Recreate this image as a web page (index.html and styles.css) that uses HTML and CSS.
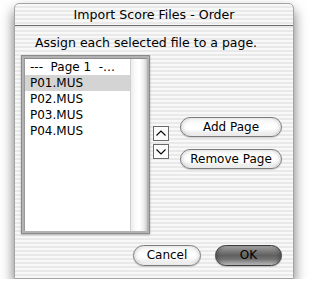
FILE: index.html
```html
<!DOCTYPE html>
<html>
<head>
<meta charset="utf-8">
<link rel="stylesheet" href="styles.css">
</head>
<body>
<div class="window">
  <div class="titlebar">Import Score Files - Order</div>
  <div class="content">
    <div class="prompt">Assign each selected file to a page.</div>
    <div class="main">
      <div class="listframe">
        <div class="listinner">
          <div class="rows">
            <div class="row">---  Page 1  -…</div>
            <div class="row selected">P01.MUS</div>
            <div class="row">P02.MUS</div>
            <div class="row">P03.MUS</div>
            <div class="row">P04.MUS</div>
          </div>
          <div class="scroll"></div>
        </div>
      </div>
      <div class="arrows">
        <div class="arrow"><svg width="14" height="13" viewBox="0 0 14 13"><path d="M2.5 8.5 L7 4 L11.5 8.5" fill="none" stroke="#000" stroke-width="1.1"/></svg></div>
        <div class="arrow"><svg width="14" height="13" viewBox="0 0 14 13"><path d="M2.5 4.5 L7 9 L11.5 4.5" fill="none" stroke="#000" stroke-width="1.1"/></svg></div>
      </div>
      <div class="sidebuttons">
        <div class="btn side">Add Page</div>
        <div class="btn side">Remove Page</div>
      </div>
    </div>
    <div class="footer">
      <div class="btn cancel">Cancel</div>
      <div class="btn ok">OK</div>
    </div>
  </div>
</div>
</body>
</html>
```
FILE: styles.css
```css
html, body {
  margin: 0;
  padding: 0;
  background: #ffffff;
}
body {
  font-family: "DejaVu Sans", Verdana, sans-serif;
  color: #000;
}
.window {
  margin: 3px 0 0 14px;
  width: 280px;
  height: 276px;
  box-sizing: border-box;
  border: 1px solid #a4a4a4;
  border-radius: 5px 5px 0 0;
  background: repeating-linear-gradient(to bottom, #f8f8f8 0px, #f8f8f8 2px, #e9e9e9 2px, #e9e9e9 4px);
  box-shadow: 0 7px 13px rgba(0,0,0,0.55);
  display: flex;
  flex-direction: column;
}
.titlebar {
  height: 21px;
  line-height: 21px;
  border-bottom: 1px solid #6e6e6e;
  text-align: center;
  font-size: 12.6px;
  border-radius: 5px 5px 0 0;
}
.content {
  padding: 8px 11px 0 6px;
  display: flex;
  flex-direction: column;
}
.prompt {
  padding-left: 14px;
  line-height: 18px;
  font-size: 12.5px;
}
.main {
  display: flex;
  align-items: flex-start;
  margin-top: 3px;
}
.listframe {
  width: 131px;
  height: 179px;
  box-sizing: border-box;
  border: 1px solid #8a8a8a;
  padding: 2px;
  background: #b2b2b2;
  box-shadow: 0 1px 2px rgba(0,0,0,0.25);
}
.listinner {
  height: 100%;
  box-sizing: border-box;
  border-top: 1px solid #8c8c8c;
  border-left: 1px solid #9a9a9a;
  background: #fff;
  display: flex;
}
.rows {
  flex: 1;
  font-size: 12px;
}
.row {
  height: 16px;
  line-height: 16px;
  padding-left: 5px;
  white-space: pre;
  overflow: hidden;
}
.row.selected {
  background: #d4d4d4;
}
.scroll {
  width: 16px;
  border-left: 1px solid #cfcfcf;
  background: linear-gradient(to right, #ececec 0%, #fcfcfc 30%, #ffffff 55%, #eeeeee 80%, #cdcdcd 100%);
}
.arrows {
  margin-left: 3px;
  margin-top: 71px;
  display: flex;
  flex-direction: column;
  gap: 3px;
}
.arrow {
  width: 16px;
  height: 15px;
  box-sizing: border-box;
  border: 1px solid #6a6a6a;
  background: #fbfbfb;
  display: flex;
}
.sidebuttons {
  margin-left: 11px;
  margin-top: 62px;
  display: flex;
  flex-direction: column;
  gap: 12px;
}
.btn {
  box-sizing: border-box;
  border-radius: 11px;
  text-align: center;
  font-size: 12px;
  border: 1px solid #7c7c7c;
  background: linear-gradient(to bottom, #f2f2f2 0%, #ffffff 40%, #ffffff 60%, #ececec 85%, #f6f6f6 100%);
  box-shadow: inset 3px 0 4px -2px rgba(0,0,0,0.18), inset -3px 0 4px -2px rgba(0,0,0,0.18), 0 1px 1px rgba(0,0,0,0.15);
}
.btn.side {
  width: 102px;
  height: 20px;
  line-height: 18px;
}
.footer {
  margin-top: 11px;
  display: flex;
  justify-content: flex-end;
  gap: 14px;
}
.cancel {
  width: 68px;
  height: 21px;
  line-height: 19px;
}
.ok {
  width: 67px;
  height: 21px;
  line-height: 19px;
  border-color: #3a3a3a;
  background: linear-gradient(to bottom, #a8a8a8 0%, #7e7e7e 25%, #606060 50%, #727272 70%, #a0a0a0 88%, #c4c4c4 100%);
  box-shadow: inset 3px 0 4px -2px rgba(0,0,0,0.3), inset -3px 0 4px -2px rgba(0,0,0,0.3), 0 1px 1px rgba(0,0,0,0.2);
}
```
